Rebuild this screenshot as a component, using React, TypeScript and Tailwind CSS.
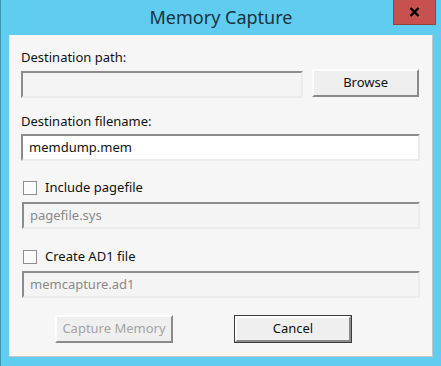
import React from "react";

const font = { fontFamily: '"Noto Sans", "Open Sans", Arial, sans-serif' };

function SunkenBox({ value, disabled, className = "" }: { value: string; disabled?: boolean; className?: string }) {
  return (
    <div
      className={`h-[27px] border-2 border-t-[#8c8c8c] border-l-[#8c8c8c] border-b-[#ececec] border-r-[#ececec] flex items-center px-[6px] text-[13px] ${
        disabled ? "bg-[#f4f4f4] text-[#8a8a8a]" : "bg-white text-[#111]"
      } ${className}`}
    >
      {value}
    </div>
  );
}

function RaisedButton({ label, disabled, isDefault, className = "" }: { label: string; disabled?: boolean; isDefault?: boolean; className?: string }) {
  return (
    <div className={`h-[28px] ${isDefault ? "border border-[#3c3c3c]" : ""} ${className}`}>
      <div
        className={`h-full border-2 border-t-[#fdfdfd] border-l-[#fdfdfd] border-b-[#8a8a8a] border-r-[#8a8a8a] bg-[#efefef] flex items-center justify-center text-[13px] ${
          disabled ? "text-[#a3a3a3]" : "text-[#111]"
        }`}
      >
        {label}
      </div>
    </div>
  );
}

function CheckRow({ label }: { label: string }) {
  return (
    <div className="flex items-center h-[14px] ml-[2px]">
      <div className="w-[14px] h-[14px] border border-[#8e8e8e] bg-[#fbfbfb]" />
      <span className="ml-[8px] text-[13px] text-[#111]">{label}</span>
    </div>
  );
}

export default function App() {
  return (
    <div className="w-[441px] h-[366px] bg-[#60cdf0] border-l border-[#3e93ad] flex flex-col" style={font}>
      {/* Title bar */}
      <div className="h-[35px] relative flex items-center justify-center">
        <span className="text-[18px] text-[#1a3242]">Memory Capture</span>
        <div className="absolute right-[5px] top-0 w-[43px] h-[25px] bg-[#c75050] border border-t-0 border-[#9b3e3e] flex items-center justify-center">
          <svg width="11" height="10" viewBox="0 0 11 10">
            <path d="M1.5 1 L9.5 9 M9.5 1 L1.5 9" stroke="#000" strokeWidth="2.4" />
          </svg>
        </div>
      </div>

      {/* Client area */}
      <div className="ml-[8px] mr-[8px] h-[322px] bg-[#f6f6f6] border-r border-b border-[#c6c6c6] flex flex-col pl-[12px] pr-[13px] pt-[14px] text-[13px] text-[#111]">
        <div className="h-[17px] leading-[17px]">Destination path:</div>
        <div className="flex items-start mt-[3px]">
          <SunkenBox value="" disabled className="w-[283px] mt-[2px]" />
          <RaisedButton label="Browse" className="ml-[9px] w-[107px]" />
        </div>

        <div className="h-[17px] leading-[17px] mt-[15px]">Destination filename:</div>
        <SunkenBox value="memdump.mem" className="mt-[4px] w-[399px]" />

        <div className="mt-[20px]">
          <CheckRow label="Include pagefile" />
        </div>
        <SunkenBox value="pagefile.sys" disabled className="mt-[7px] w-[398px] ml-[1px]" />

        <div className="mt-[21px]">
          <CheckRow label="Create AD1 file" />
        </div>
        <SunkenBox value="memcapture.ad1" disabled className="mt-[7px] w-[398px] ml-[1px]" />

        <div className="flex mt-[17px]">
          <RaisedButton label="Capture Memory" disabled className="ml-[34px] w-[118px]" />
          <RaisedButton label="Cancel" isDefault className="ml-[61px] w-[118px]" />
        </div>
      </div>
    </div>
  );
}
